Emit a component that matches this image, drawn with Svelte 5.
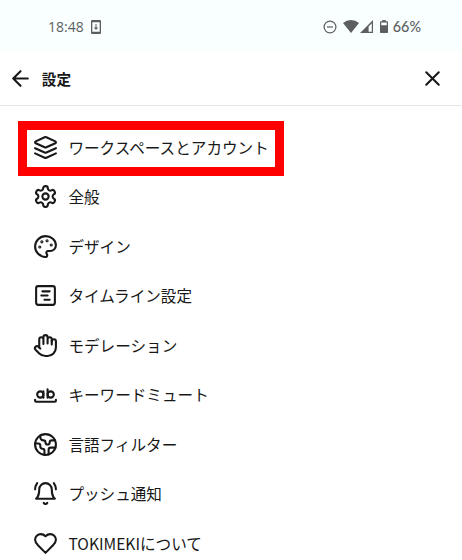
<script lang="ts">
	type Item = { label: string; icon: string; marked?: boolean };

	const items: Item[] = [
		{ label: 'ワークスペースとアカウント', icon: 'layers', marked: true },
		{ label: '全般', icon: 'settings' },
		{ label: 'デザイン', icon: 'palette' },
		{ label: 'タイムライン設定', icon: 'timeline' },
		{ label: 'モデレーション', icon: 'hand' },
		{ label: 'キーワードミュート', icon: 'word' },
		{ label: '言語フィルター', icon: 'earth' },
		{ label: 'プッシュ通知', icon: 'bell' },
		{ label: 'TOKIMEKIについて', icon: 'heart' }
	];
</script>

<div class="screen">
	<div class="status-bar">
		<div class="status-left">
			<span class="clock">18:48</span>
			<svg class="update-icon" viewBox="0 0 10 14">
				<path fill-rule="evenodd" d="M1.3 0h7.4Q10 0 10 1.3v11.4q0 1.3-1.3 1.3H1.3Q0 14 0 12.7V1.3Q0 0 1.3 0ZM1.3 2.3v9.4h7.4V2.3Z" />
				<path d="M4.5 4h1v3.6h1.8L5 10 2.7 7.6h1.8Z" />
			</svg>
		</div>
		<div class="status-right">
			<svg class="dnd-icon" viewBox="0 0 14 14">
				<circle cx="7" cy="7" r="5.9" fill="none" stroke="currentColor" stroke-width="1.2" />
				<path d="M4 6.4h6v1.2H4Z" />
			</svg>
			<svg class="wifi-icon" viewBox="0 0 16 13"><path d="M0 3.1Q3.6 0 8 0t8 3.1L8 13Z" /></svg>
			<svg class="signal-icon" viewBox="0 0 13 13">
				<path fill-rule="evenodd" d="M13 0v13H0ZM11.8 3.2 8.6 6.4v5.4h3.2Z" />
			</svg>
			<svg class="battery-icon" viewBox="0 0 8 13">
				<path fill-rule="evenodd" d="M2.3 0h3.4v1.2h1.5q.8 0 .8.8v10.2q0 .8-.8.8H.8q-.8 0-.8-.8V2q0-.8.8-.8h1.5ZM1.2 2.5v2.7h5.6V2.5Z" />
			</svg>
			<span class="battery">66%</span>
		</div>
	</div>

	<header class="header">
		<button class="icon-btn back" aria-label="戻る">
			<svg class="icon" viewBox="0 0 24 24"><path d="m12 19-7-7 7-7M19 12H5" /></svg>
		</button>
		<h1 class="title">設定</h1>
		<button class="icon-btn close" aria-label="閉じる">
			<svg class="icon" viewBox="0 0 24 24"><path d="M18 6 6 18M6 6l12 12" /></svg>
		</button>
	</header>

	<nav class="menu">
		{#each items as item}
			<a class="menu-item" href="#{item.icon}">
				<svg class="icon" viewBox="0 0 24 24">
					{#if item.icon === 'layers'}
						<path d="M12.83 2.18a2 2 0 0 0-1.66 0L2.6 6.08a1 1 0 0 0 0 1.83l8.58 3.91a2 2 0 0 0 1.66 0l8.58-3.9a1 1 0 0 0 0-1.83Z" />
						<path d="m22 17.65-9.17 4.16a2 2 0 0 1-1.66 0L2 17.65" />
						<path d="m22 12.65-9.17 4.16a2 2 0 0 1-1.66 0L2 12.65" />
					{:else if item.icon === 'settings'}
						<path d="M12.22 2h-.44a2 2 0 0 0-2 2v.18a2 2 0 0 1-1 1.73l-.43.25a2 2 0 0 1-2 0l-.15-.08a2 2 0 0 0-2.73.73l-.22.38a2 2 0 0 0 .73 2.73l.15.1a2 2 0 0 1 1 1.72v.51a2 2 0 0 1-1 1.74l-.15.09a2 2 0 0 0-.73 2.73l.22.38a2 2 0 0 0 2.73.73l.15-.08a2 2 0 0 1 2 0l.43.25a2 2 0 0 1 1 1.73V20a2 2 0 0 0 2 2h.44a2 2 0 0 0 2-2v-.18a2 2 0 0 1 1-1.73l.43-.25a2 2 0 0 1 2 0l.15.08a2 2 0 0 0 2.73-.73l.22-.39a2 2 0 0 0-.73-2.73l-.15-.08a2 2 0 0 1-1-1.74v-.5a2 2 0 0 1 1-1.74l.15-.09a2 2 0 0 0 .73-2.73l-.22-.38a2 2 0 0 0-2.73-.73l-.15.08a2 2 0 0 1-2 0l-.43-.25a2 2 0 0 1-1-1.73V4a2 2 0 0 0-2-2z" />
						<circle cx="12" cy="12" r="3" />
					{:else if item.icon === 'palette'}
						<circle class="dot" cx="13.5" cy="6.5" r=".5" />
						<circle class="dot" cx="17.5" cy="10.5" r=".5" />
						<circle class="dot" cx="8.5" cy="7.5" r=".5" />
						<circle class="dot" cx="6.5" cy="12.5" r=".5" />
						<path d="M12 2C6.5 2 2 6.5 2 12s4.5 10 10 10c.926 0 1.648-.746 1.648-1.688 0-.437-.18-.835-.437-1.125-.29-.289-.438-.652-.438-1.125a1.64 1.64 0 0 1 1.668-1.668h1.996c3.051 0 5.555-2.503 5.555-5.554C21.965 6.012 17.461 2 12 2z" />
					{:else if item.icon === 'timeline'}
						<rect x="3" y="3" width="18" height="18" rx="2" />
						<path d="M9 8h7M8 12h6M11 16h5" />
					{:else if item.icon === 'hand'}
						<path d="M18 11V6a2 2 0 0 0-4 0M14 10V4a2 2 0 0 0-4 0v2M10 10.5V6a2 2 0 0 0-4 0v8" />
						<path d="M18 8a2 2 0 1 1 4 0v6a8 8 0 0 1-8 8h-2c-2.8 0-4.5-.86-5.99-2.34l-3.6-3.6a2 2 0 0 1 2.83-2.82L7 15" />
					{:else if item.icon === 'word'}
						<circle cx="7" cy="12" r="3" />
						<circle cx="17" cy="12" r="3" />
						<path d="M10 9v6M14 7v8M22 17v1c0 .5-.5 1-1 1H3c-.5 0-1-.5-1-1v-1" />
					{:else if item.icon === 'earth'}
						<path d="M21.54 15H17a2 2 0 0 0-2 2v4.54" />
						<path d="M7 3.34V5a3 3 0 0 0 3 3 2 2 0 0 1 2 2c0 1.1.9 2 2 2a2 2 0 0 0 2-2c0-1.1.9-2 2-2h3.17" />
						<path d="M11 21.95V18a2 2 0 0 0-2-2 2 2 0 0 1-2-2v-1a2 2 0 0 0-2-2H2.05" />
						<circle cx="12" cy="12" r="10" />
					{:else if item.icon === 'bell'}
						<path d="M6 8a6 6 0 0 1 12 0c0 7 3 9 3 9H3s3-2 3-9" />
						<path d="M10.3 21a1.94 1.94 0 0 0 3.4 0M4 2C2.8 3.7 2 5.8 2 8M22 8c0-2.2-.8-4.3-2-6" />
					{:else}
						<path d="M19 14c1.49-1.46 3-3.21 3-5.5A5.5 5.5 0 0 0 16.5 3c-1.76 0-3 .5-4.5 2-1.5-1.5-2.74-2-4.5-2A5.5 5.5 0 0 0 2 8.5c0 2.3 1.5 4.05 3 5.5l7 7Z" />
					{/if}
				</svg>
				<span class="label">{item.label}</span>
				{#if item.marked}
					<span class="marker"></span>
				{/if}
			</a>
		{/each}
	</nav>
</div>

<style>
	:global(body) {
		margin: 0;
		background: #fff;
	}

	.screen {
		height: 560px;
		overflow: hidden;
		background: #fff;
		color: #181818;
		font-family: 'Noto Sans CJK JP', sans-serif;
	}

	.status-bar {
		display: flex;
		justify-content: space-between;
		box-sizing: border-box;
		height: 52px;
		padding: 1px 41px 0 48px;
		background: #f9feff;
		color: #5c5e5f;
		font-size: 14px;
	}

	.status-bar svg {
		fill: currentColor;
	}

	.status-left,
	.status-right {
		display: flex;
		align-items: center;
	}

	.clock {
		font-family: 'Open Sans', sans-serif;
		font-weight: 500;
	}

	.update-icon {
		width: 10px;
		height: 14px;
		margin-left: 7px;
	}

	.dnd-icon {
		width: 14px;
		height: 14px;
	}

	.wifi-icon {
		width: 16px;
		height: 13px;
		margin-left: 6px;
	}

	.signal-icon {
		width: 13px;
		height: 13px;
		margin-left: 1px;
	}

	.battery-icon {
		width: 8px;
		height: 13px;
		margin-left: 7px;
	}

	.battery {
		margin-left: 5px;
		font-family: Lato, sans-serif;
		font-size: 14.4px;
		font-weight: 500;
	}

	.header {
		display: flex;
		align-items: center;
		box-sizing: border-box;
		height: 54px;
		padding: 0 17px 0 8px;
		border-bottom: 1px solid #e6e6e6;
	}

	.icon-btn {
		display: flex;
		padding: 0;
		border: 0;
		background: none;
		color: inherit;
	}

	.close {
		margin-left: auto;
	}

	.icon {
		flex: none;
		width: 25px;
		height: 25px;
		fill: none;
		stroke: currentColor;
		stroke-width: 2;
		stroke-linecap: round;
		stroke-linejoin: round;
	}

	.icon .dot {
		fill: currentColor;
	}

	.title {
		margin: 0 0 0 8.8px;
		padding-bottom: 1px;
		font-size: 14.6px;
		font-weight: 700;
		line-height: 23px;
	}

	.menu {
		padding-top: 16.5px;
	}

	.menu-item {
		position: relative;
		display: flex;
		align-items: center;
		gap: 10.4px;
		height: 49.5px;
		padding-left: 33px;
		color: inherit;
		text-decoration: none;
	}

	.label {
		padding-bottom: 1px;
		font-size: 15.6px;
		line-height: 24px;
		white-space: nowrap;
	}

	/* red frame over the first entry */
	.marker {
		position: absolute;
		top: -1.5px;
		left: 18px;
		box-sizing: border-box;
		width: 266px;
		height: 55px;
		border: 9px solid #f00;
	}
</style>
